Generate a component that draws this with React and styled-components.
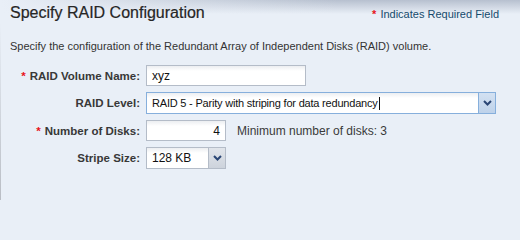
import React from 'react';
import styled, { createGlobalStyle } from 'styled-components';

const GlobalStyle = createGlobalStyle`
  html, body {
    margin: 0;
    padding: 0;
    background: #e9eff7;
  }
`;

const Panel = styled.div`
  width: 520px;
  height: 200px;
  box-sizing: border-box;
  font-family: 'Liberation Sans', Arial, sans-serif;
  color: #333333;
  background:
    linear-gradient(to right, #e9eff7 0%, rgba(233, 239, 247, 0) 65%),
    linear-gradient(to bottom, #b7c0cf 0px, #e9eff7 14px);
  background-repeat: no-repeat;
  border-left: 1px solid;
  border-image: linear-gradient(to bottom, rgba(185, 189, 196, 0) 12%, #b9bdc4 100%) 1;
`;

const Header = styled.div`
  display: flex;
  justify-content: space-between;
  align-items: baseline;
  padding: 3px 21px 0 9px;
`;

const Title = styled.h1`
  margin: 0;
  font-size: 16px;
  font-weight: 400;
  line-height: 20px;
  color: #262626;
  -webkit-text-stroke: 0.2px #262626;
`;

const RequiredNote = styled.div`
  font-size: 11px;
  color: #164a6c;
`;

const Star = styled.span`
  color: #e8141b;
  font-weight: 700;
  margin-right: 4px;
`;

const Description = styled.p`
  margin: 16px 0 0 9px;
  font-size: 11px;
  line-height: 14px;
  color: #333333;
`;

const Form = styled.div`
  display: grid;
  grid-template-columns: 139px auto;
  column-gap: 6px;
  row-gap: 6px;
  margin-top: 12px;
  align-items: center;
  justify-items: start;
`;

const Label = styled.label`
  justify-self: end;
  font-size: 11.5px;
  font-weight: 700;
  color: #383838;
  white-space: nowrap;
`;

const FieldRow = styled.div`
  display: flex;
  align-items: center;
  gap: 11px;
`;

const TextBox = styled.div`
  box-sizing: border-box;
  width: ${(p) => p.$width}px;
  height: 21px;
  padding: 0 5px;
  display: flex;
  align-items: center;
  justify-content: ${(p) => (p.$right ? 'flex-end' : 'flex-start')};
  border: 1px solid #b4bcc8;
  background: linear-gradient(to bottom, #eceef1 0px, #ffffff 5px);
  font-size: 12px;
  color: #111111;
`;

const Select = styled.div`
  box-sizing: border-box;
  width: ${(p) => p.$width}px;
  height: 22px;
  display: flex;
  border: 1px solid ${(p) => (p.$focused ? '#86afdc' : '#b4bcc8')};
  background: linear-gradient(to bottom, #eceef1 0px, #ffffff 5px);
`;

const SelectValue = styled.div`
  flex: 1;
  display: flex;
  align-items: center;
  padding-left: 5px;
  font-size: ${(p) => (p.$small ? '11px' : '12px')};
  letter-spacing: ${(p) => (p.$small ? '-0.2px' : '0')};
  color: #111111;
  white-space: nowrap;
  overflow: hidden;
`;

const Caret = styled.span`
  display: inline-block;
  width: 1px;
  height: 13px;
  margin-left: 1px;
  background: #111111;
`;

const DropButton = styled.div`
  width: 16px;
  display: flex;
  align-items: center;
  justify-content: center;
  border-left: 1px solid ${(p) => (p.$focused ? '#86afdc' : '#b4bcc8')};
  background: ${(p) =>
    p.$focused
      ? 'linear-gradient(to bottom, #d3e1f2, #bed2ea)'
      : 'linear-gradient(to bottom, #e1e5eb, #cdd3dc)'};
`;

const Hint = styled.span`
  font-size: 12px;
  color: #3a3a3a;
`;

const Chevron = () => (
  <svg width="9" height="6" viewBox="0 0 9 6">
    <polyline
      points="1,1 4.5,4.5 8,1"
      fill="none"
      stroke="#2a4675"
      strokeWidth="2"
    />
  </svg>
);

const App = () => {
  return (
    <>
      <GlobalStyle />
      <Panel>
        <Header>
          <Title>Specify RAID Configuration</Title>
          <RequiredNote>
            <Star>*</Star>Indicates Required Field
          </RequiredNote>
        </Header>
        <Description>
          Specify the configuration of the Redundant Array of Independent Disks
          (RAID) volume.
        </Description>
        <Form>
          <Label>
            <Star>*</Star>RAID Volume Name:
          </Label>
          <TextBox $width={160}>xyz</TextBox>

          <Label>RAID Level:</Label>
          <Select $width={350} $focused>
            <SelectValue $small>
              RAID 5 - Parity with striping for data redundancy
              <Caret />
            </SelectValue>
            <DropButton $focused>
              <Chevron />
            </DropButton>
          </Select>

          <Label>
            <Star>*</Star>Number of Disks:
          </Label>
          <FieldRow>
            <TextBox $width={80} $right>
              4
            </TextBox>
            <Hint>Minimum number of disks: 3</Hint>
          </FieldRow>

          <Label>Stripe Size:</Label>
          <Select $width={80}>
            <SelectValue>128 KB</SelectValue>
            <DropButton>
              <Chevron />
            </DropButton>
          </Select>
        </Form>
      </Panel>
    </>
  );
};

export default App;
